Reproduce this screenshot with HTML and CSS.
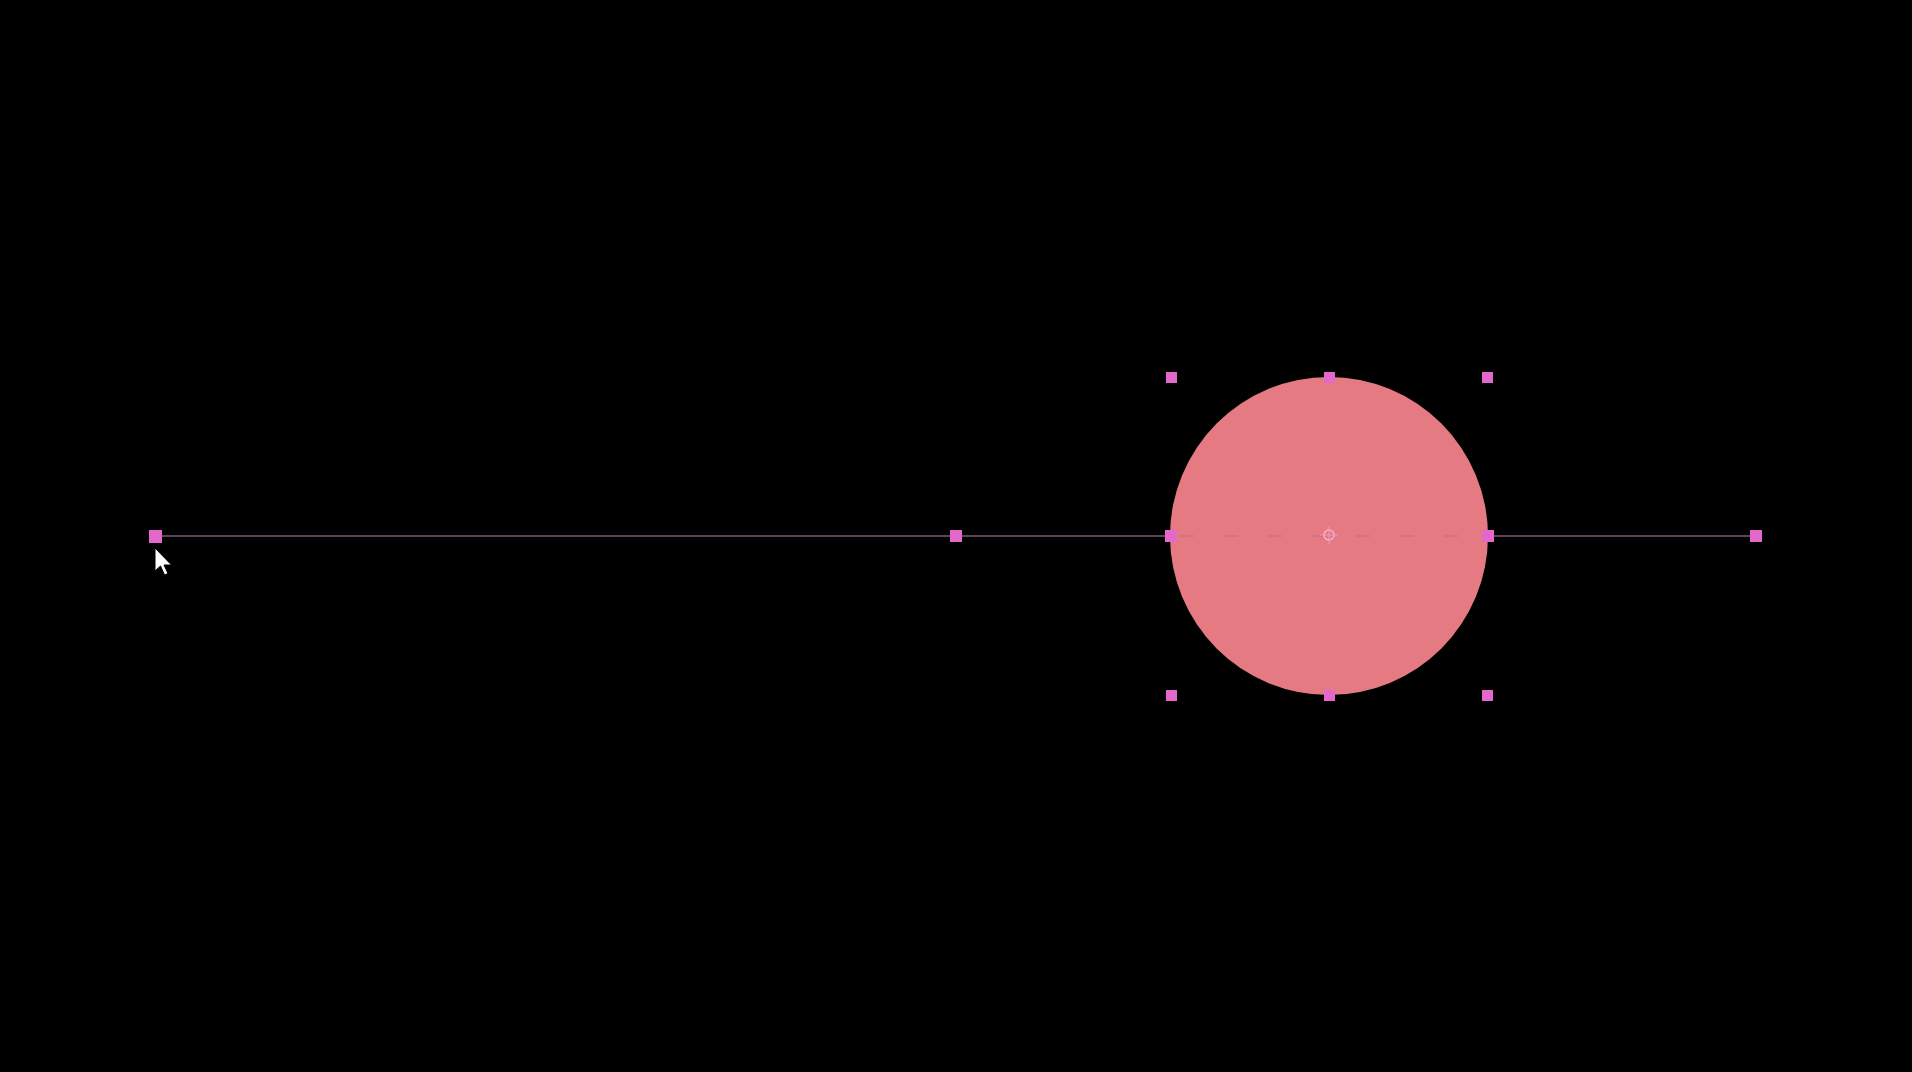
FILE: index.html
```html
<!DOCTYPE html>
<html>
<head>
<meta charset="utf-8">
<link rel="stylesheet" href="styles.css">
</head>
<body>
<div class="stage">
<svg class="canvas" width="1912" height="1072" viewBox="0 0 1912 1072">
  <line class="path-line" x1="155" y1="536" x2="1756" y2="536"/>
  <circle class="shape" cx="1329" cy="536" r="159"/>
  <line class="dash" x1="1180" y1="536" x2="1480" y2="536"/>
  <g class="center-mark">
    <circle cx="1329" cy="535" r="5"/>
    <line x1="1329" y1="526" x2="1329" y2="544"/>
    <line x1="1320" y1="535" x2="1338" y2="535"/>
  </g>
  <g class="handle">
    <rect x="149" y="530" width="13" height="13"/>
    <rect x="950" y="530" width="12" height="12"/>
    <rect x="1750" y="530" width="12" height="12"/>
    <rect x="1166" y="372" width="11" height="11"/>
    <rect x="1324" y="372" width="11" height="11"/>
    <rect x="1482" y="372" width="11" height="11"/>
    <rect x="1165" y="530" width="12" height="12"/>
    <rect x="1482" y="530" width="12" height="12"/>
    <rect x="1166" y="690" width="11" height="11"/>
    <rect x="1324" y="690" width="11" height="11"/>
    <rect x="1482" y="690" width="11" height="11"/>
  </g>
  <path class="cursor" d="M155 548 L155 571 L160.5 566 L164.5 575 L168 573.5 L164 565 L171.5 565 Z"/>
</svg>
</div>
</body>
</html>
```
FILE: styles.css
```css
html, body {
  margin: 0;
  padding: 0;
  background: #000;
  overflow: hidden;
}
.stage {
  width: 1912px;
  height: 1072px;
  background: #000;
}
.canvas {
  display: block;
}
.path-line {
  stroke: #7d5a74;
  stroke-width: 1.5;
}
.shape {
  fill: #e57a83;
}
.dash {
  stroke: #d26e7c;
  stroke-width: 2;
  stroke-dasharray: 14 30;
  opacity: 0.6;
}
.center-mark circle {
  fill: none;
  stroke: #f2b0d0;
  stroke-width: 1.5;
}
.center-mark line {
  stroke: #f0a8c8;
  stroke-width: 1;
  opacity: 0.7;
}
.handle rect {
  fill: #e468cc;
}
.cursor {
  fill: #fff;
  stroke: #000;
  stroke-width: 1;
}
```
